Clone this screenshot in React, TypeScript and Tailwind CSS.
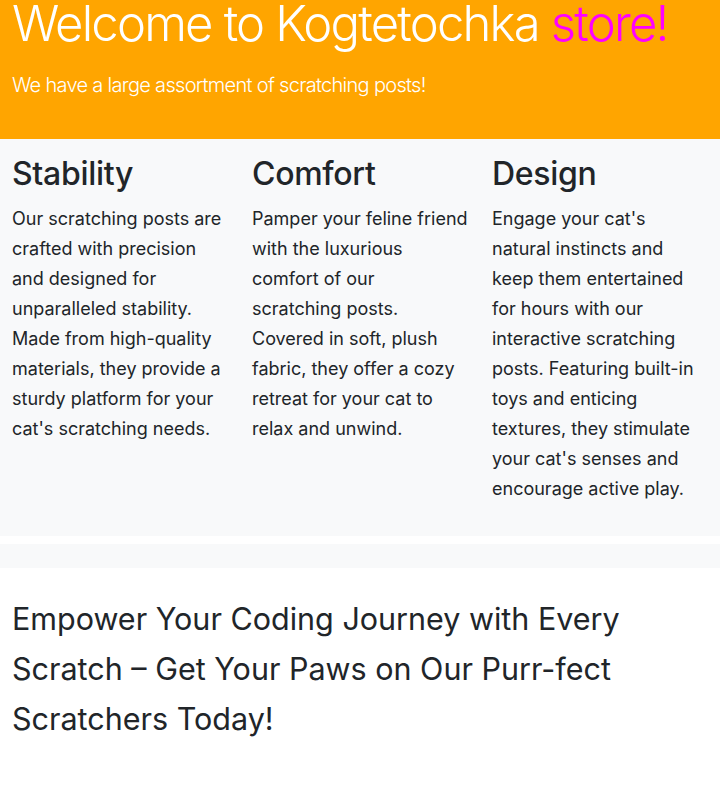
export default function App() {
  const cols = [
    {
      title: 'Stability',
      text: "Our scratching posts are crafted with precision and designed for unparalleled stability. Made from high-quality materials, they provide a sturdy platform for your cat's scratching needs.",
    },
    {
      title: 'Comfort',
      text: 'Pamper your feline friend with the luxurious comfort of our scratching posts. Covered in soft, plush fabric, they offer a cozy retreat for your cat to relax and unwind.',
    },
    {
      title: 'Design',
      text: "Engage your cat's natural instincts and keep them entertained for hours with our interactive scratching posts. Featuring built-in toys and enticing textures, they stimulate your cat's senses and encourage active play.",
    },
  ]

  return (
    <div className="min-h-screen bg-white text-[#212529] font-['Inter',sans-serif]">
      {/* header */}
      <header className="h-[139px] overflow-hidden bg-[#ffa500] px-3 text-white">
        <h1 className="text-[49px] leading-[47px] font-light tracking-[-1.8px] whitespace-nowrap">
          Welcome to Kogtetochka <span className="text-[#ff00ff]">store!</span>
        </h1>
        <p className="mt-[23px] text-[20px] leading-[30px] font-light tracking-[-0.7px]">
          We have a large assortment of scratching posts!
        </p>
      </header>

      {/* features */}
      <section className="bg-[#f8f9fa] pt-4 pb-8">
        <div className="grid grid-cols-3">
          {cols.map((c) => (
            <div key={c.title} className="px-3">
              <h2 className="text-[32px] leading-[1.2] font-medium tracking-[-0.3px] mb-[11px]">{c.title}</h2>
              <p className="text-[18px] leading-[30px] font-normal">{c.text}</p>
            </div>
          ))}
        </div>
      </section>

      <div className="h-2" />
      <div className="h-6 bg-[#f8f9fa]" />

      <section className="px-3 pt-[26px]">
        <p className="text-[30.5px] leading-[50px] font-normal">
          Empower Your Coding Journey with Every Scratch – Get Your Paws on Our Purr-fect Scratchers Today!
        </p>
      </section>
    </div>
  )
}
